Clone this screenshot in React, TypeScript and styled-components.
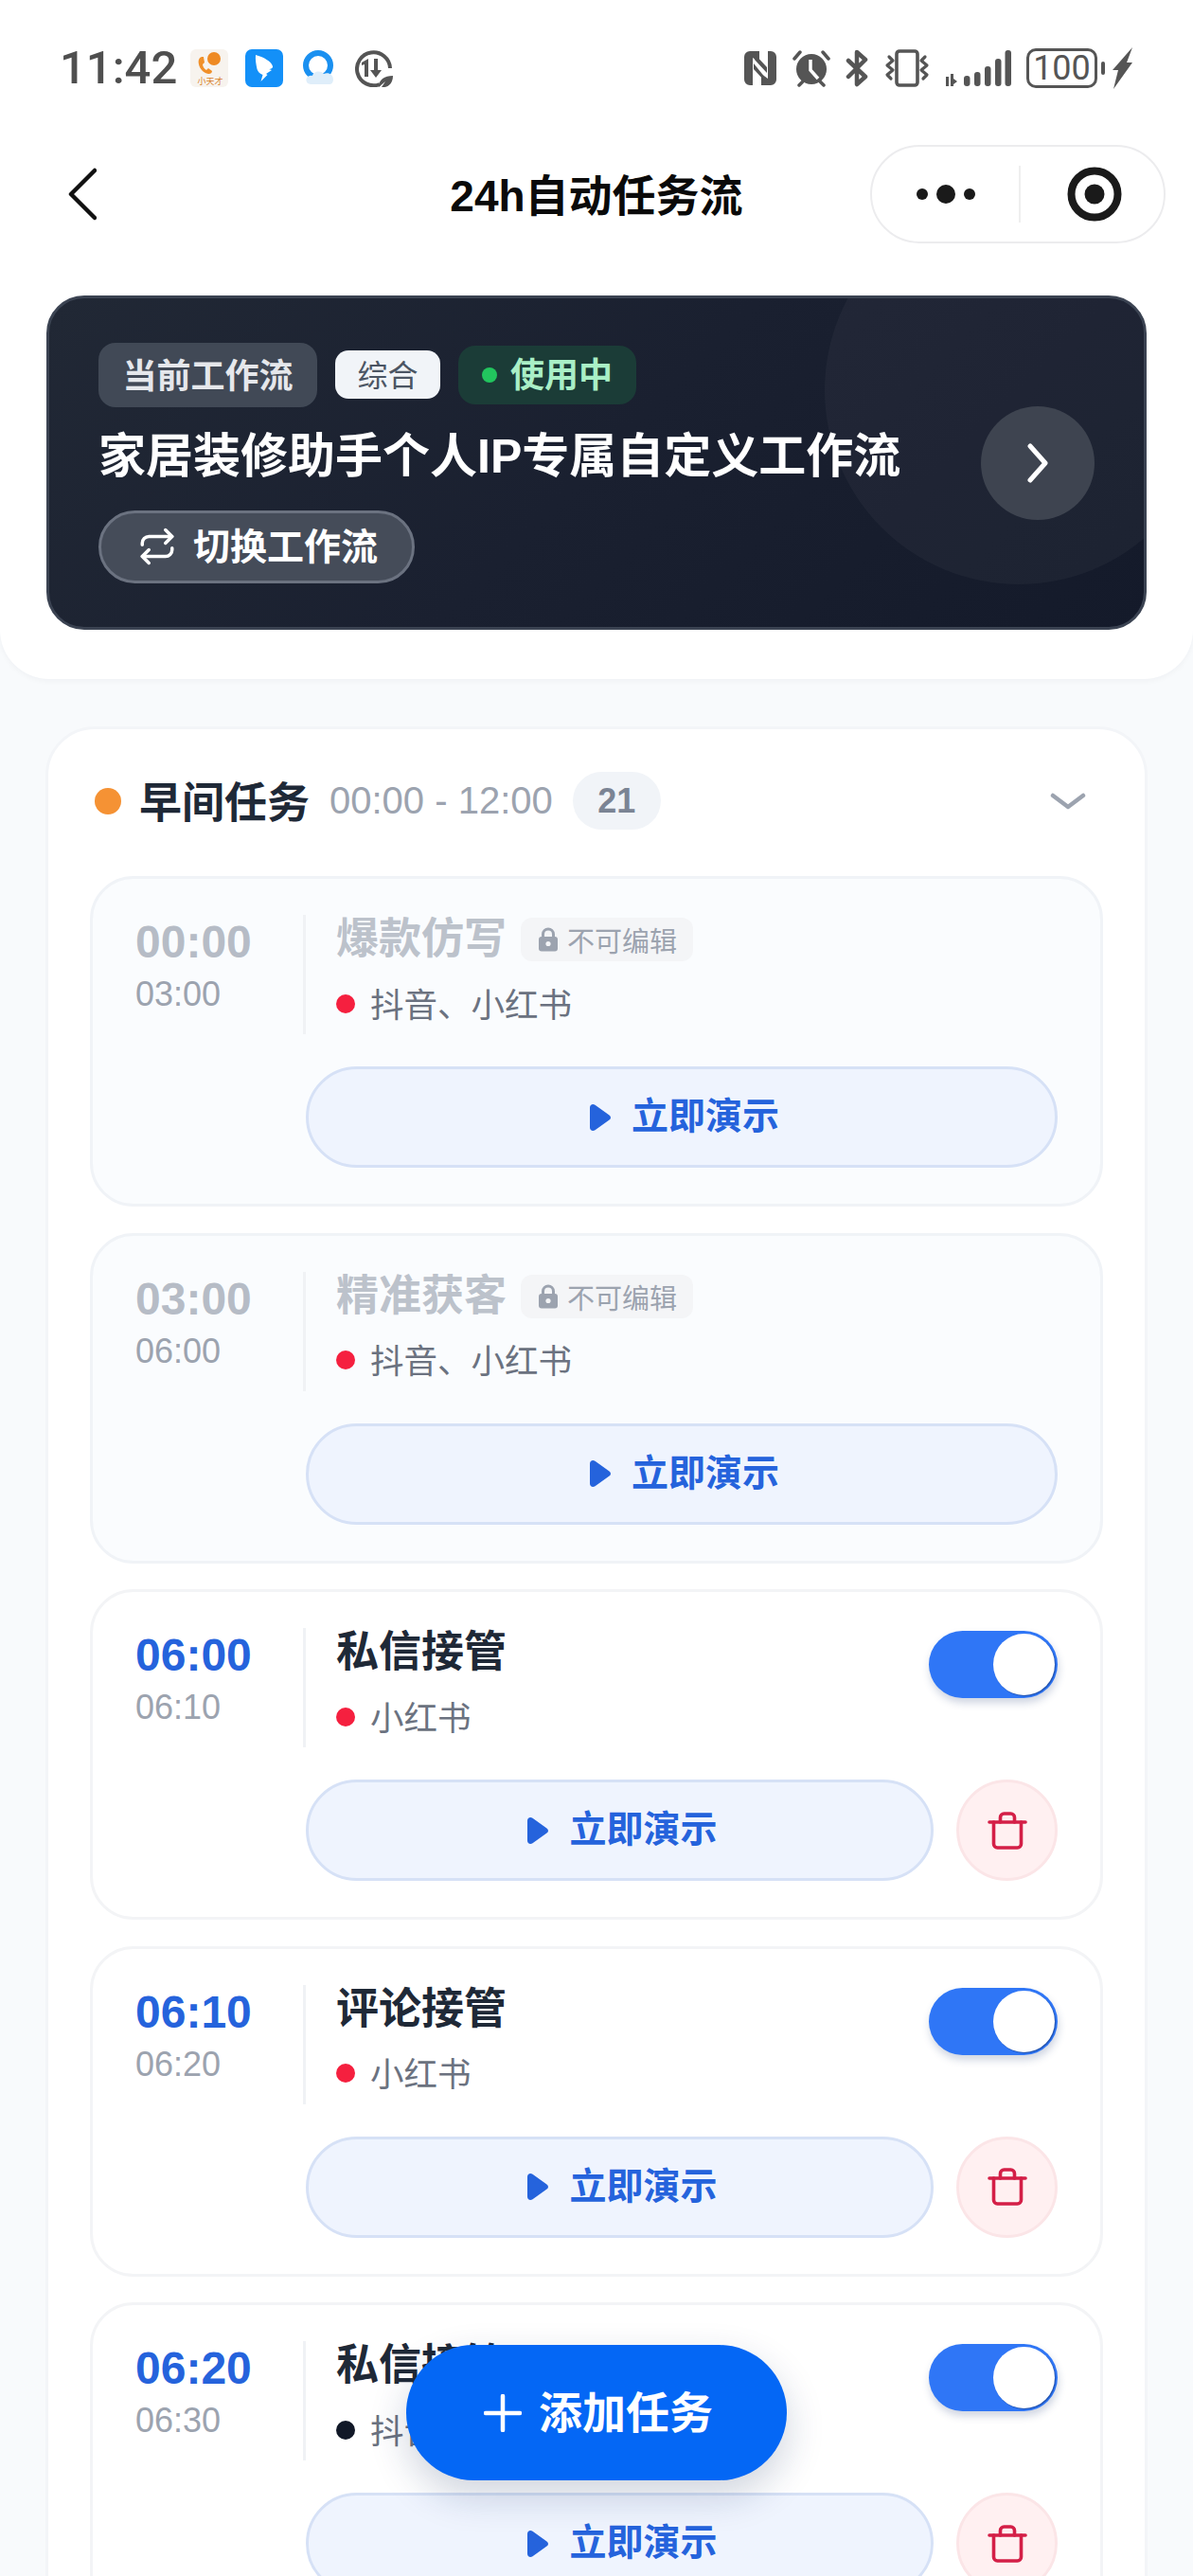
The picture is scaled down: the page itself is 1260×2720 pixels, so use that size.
import React from 'react';
import styled, { createGlobalStyle } from 'styled-components';
import { Repeat } from 'lucide-react';

const GlobalStyle = createGlobalStyle`
  html, body {
    margin: 0;
    padding: 0;
    background: #f8fafc;
  }
  * {
    box-sizing: border-box;
  }
`;

const FONT = `"Liberation Sans", "Noto Sans CJK SC", sans-serif`;

interface Task {
  start: string;
  end: string;
  title: string;
  platform: string;
  dot: string;
  locked?: boolean;
}

const TASKS: Task[] = [
  { start: '00:00', end: '03:00', title: '爆款仿写', platform: '抖音、小红书', dot: '#f5203f', locked: true },
  { start: '03:00', end: '06:00', title: '精准获客', platform: '抖音、小红书', dot: '#f5203f', locked: true },
  { start: '06:00', end: '06:10', title: '私信接管', platform: '小红书', dot: '#f5203f' },
  { start: '06:10', end: '06:20', title: '评论接管', platform: '小红书', dot: '#f5203f' },
  { start: '06:20', end: '06:30', title: '私信接管', platform: '抖音', dot: '#111827' },
];

const PlayIcon = () => (
  <svg width="24" height="30" viewBox="0 0 24 30">
    <path d="M1 4.5C1 1.5 4 0 6.5 1.8L21.5 12.4C23.5 13.8 23.5 16.2 21.5 17.6L6.5 28.2C4 30 1 28.5 1 25.5Z" fill="#2563dc" />
  </svg>
);

const TrashIcon = () => (
  <svg width="42" height="42" viewBox="0 0 42 42" fill="none" stroke="#d41f47" strokeWidth="3.6" strokeLinecap="round" strokeLinejoin="round">
    <path d="M2 12H40" />
    <path d="M6.5 12V35a4 4 0 0 0 4 4H31.5a4 4 0 0 0 4-4V12" />
    <path d="M13.5 12V7a4 4 0 0 1 4-4h7a4 4 0 0 1 4 4v5" />
  </svg>
);

const LockIcon = () => (
  <svg width="22" height="26" viewBox="0 0 22 26">
    <path d="M5.5 11V7.5a5.5 5.5 0 0 1 11 0V11" fill="none" stroke="#9ca3af" strokeWidth="3" />
    <rect x="1" y="10" width="20" height="15.5" rx="3" fill="#9ca3af" />
    <circle cx="11" cy="17.5" r="2.6" fill="#f4f5f7" />
  </svg>
);

const StatusIcons = () => (
  <>
    <svg width="40" height="40" viewBox="0 0 40 40">
      <rect width="40" height="40" rx="6" fill="#f7f3ee" />
      <path d="M12 8c-3 1-4 4-3 8 1 5 5 9 10 10 2 .4 4-1 4-3l-4-3-2 2c-2-1-4-4-4-6l2-2-1-6z" fill="#f0902a" />
      <circle cx="25" cy="10" r="7" fill="#ee8a24" />
      <text x="21" y="37" textAnchor="middle" fontSize="9" fill="#d9822b" fontFamily="Noto Sans CJK SC">小天才</text>
    </svg>
    <svg width="40" height="40" viewBox="0 0 40 40">
      <rect width="40" height="40" rx="7" fill="#1390f8" />
      <path d="M11 6c8 2 17 7 18 12 .4 2-2 3-4 3l3 1-6 4 1.500 1-7 7 2-7c-3-1-5-3-6-6-1-5-2-10-1.500-15z" fill="#fff" />
    </svg>
    <svg width="40" height="40" viewBox="0 0 40 40">
      <circle cx="19" cy="17" r="13" fill="none" stroke="#1a90f0" strokeWidth="6" />
      <path d="M8 36c-4-4 0-9 5-8 1-5 9-6 12-2 5-2 10 1 10 6 0 3-2 5-4 5H11z" fill="#dfeefa" />
    </svg>
    <svg width="40" height="40" viewBox="0 0 40 40">
      <path d="M26 37A17.500 17.500 0 1 1 37 20" fill="none" stroke="#555" strokeWidth="4" />
      <path d="M14 10v19h-4V16l-3 1v-3zM20 10h4v12h4l-6 8-6-8h4z" fill="#555" />
      <path d="M25 40c0-8 6-12 15-12 0 8-5 13-12 12l4-6z" fill="#555" />
    </svg>
  </>
);

const SystemIcons = () => (
  <>
    <svg width="36" height="38" viewBox="0 0 36 38">
      <path d="M7 1h3l7 0v12L10 8v29H7a6 6 0 0 1-6-6V7a6 6 0 0 1 6-6z" fill="#555" />
      <path d="M29 37h-10V25l7 5V1h3a6 6 0 0 1 6 6v24a6 6 0 0 1-6 6z" fill="#555" />
      <path d="M12 4l13 14v6L12 10zM11 14l13 16v4L11 20z" fill="#555" />
    </svg>
    <svg width="40" height="40" viewBox="0 0 40 40">
      <circle cx="20" cy="21" r="16" fill="#555" />
      <path d="M19 11v11l8 9" fill="none" stroke="#fff" strokeWidth="3.500" />
      <path d="M2 10l6-7M38 10l-6-7M7 38l4-4M33 38l-4-4" stroke="#555" strokeWidth="3.500" strokeLinecap="round" />
    </svg>
    <svg width="25" height="40" viewBox="0 0 25 40" fill="none" stroke="#555" strokeWidth="4.500" strokeLinejoin="round" strokeLinecap="round">
      <path d="M3 12l18 17-9 8V3l9 8L3 29" />
    </svg>
    <svg width="48" height="40" viewBox="0 0 48 40" fill="none" stroke="#555" strokeWidth="3.200" strokeLinejoin="round" strokeLinecap="round">
      <rect x="13" y="2" width="22" height="36" rx="3" strokeWidth="3.600" />
      <path d="M5 8l4 4-6 5 6 5-6 5 4 4" />
      <path d="M43 8l-4 4 6 5-6 5 6 5-4 4" />
    </svg>
    <svg width="70" height="40" viewBox="0 0 70 40" fill="#555">
      <path d="M1 29h3v10H1zM6 26h3v13H6zM9 31l4 3-4 3z" />
      <rect x="20" y="28" width="6.500" height="11" rx="3" />
      <rect x="31" y="24" width="6.500" height="15" rx="3" />
      <rect x="42" y="18" width="6.500" height="21" rx="3" />
      <rect x="53" y="10" width="6.500" height="29" rx="3" />
      <rect x="63.500" y="1" width="6.500" height="38" rx="3" />
    </svg>
  </>
);

const App = () => {
  return (
    <>
      <GlobalStyle />
      <Page>
        <TopPanel>
          <StatusBar>
            <StatusLeft>
              <Clock>11:42</Clock>
              <StatusIcons />
            </StatusLeft>
            <StatusRight>
              <SystemIcons />
              <Battery>
                <BatteryBody>100</BatteryBody>
                <BatteryNub />
                <svg width="21" height="44" viewBox="0 0 21 44">
                  <path d="M21 0L15 16h6L1 44l5-20H0z" fill="#555" />
                </svg>
              </Battery>
            </StatusRight>
          </StatusBar>

          <NavBar>
            <BackButton>
              <svg width="30" height="56" viewBox="0 0 30 56" fill="none" stroke="#111" strokeWidth="4.500" strokeLinecap="round" strokeLinejoin="round">
                <path d="M28 3L3 28l25 25" />
              </svg>
            </BackButton>
            <NavTitle>24h自动任务流</NavTitle>
            <Capsule>
              <MoreButton>
                <svg width="62" height="22" viewBox="0 0 62 22" fill="#1a1a1a">
                  <circle cx="6" cy="11" r="6" />
                  <circle cx="31" cy="11" r="10" />
                  <circle cx="56" cy="11" r="6" />
                </svg>
              </MoreButton>
              <CapsuleDivider />
              <TargetButton>
                <svg width="58" height="58" viewBox="0 0 58 58">
                  <circle cx="29" cy="29" r="24.500" fill="none" stroke="#1a1a1a" strokeWidth="8" />
                  <circle cx="29" cy="29" r="10.500" fill="#1a1a1a" />
                </svg>
              </TargetButton>
            </Capsule>
          </NavBar>

          <Banner>
            <BannerCircle />
            <BannerMain>
              <ChipRow>
                <CurrentChip>当前工作流</CurrentChip>
                <TypeChip>综合</TypeChip>
                <ActiveChip>
                  <ActiveDot />
                  使用中
                </ActiveChip>
              </ChipRow>
              <BannerTitle>家居装修助手个人IP专属自定义工作流</BannerTitle>
              <SwitchButton>
                <Repeat size={42} strokeWidth={2} />
                切换工作流
              </SwitchButton>
            </BannerMain>
            <ArrowButton>
              <svg width="24" height="42" viewBox="0 0 24 42" fill="none" stroke="#fff" strokeWidth="5" strokeLinecap="round" strokeLinejoin="round">
                <path d="M4 3l16 18L4 39" />
              </svg>
            </ArrowButton>
          </Banner>
        </TopPanel>

        <Section>
          <SectionHeader>
            <SectionDot />
            <SectionTitle>早间任务</SectionTitle>
            <SectionRange>00:00 - 12:00</SectionRange>
            <CountBadge>21</CountBadge>
            <Collapse>
              <svg width="38" height="18" viewBox="0 0 38 18" fill="none" stroke="#9ca3af" strokeWidth="4.500" strokeLinecap="round" strokeLinejoin="round">
                <path d="M3 3l16 12L35 3" />
              </svg>
            </Collapse>
          </SectionHeader>

          <TaskList>
            {TASKS.map((task, index) => (
              <TaskCard key={index} $locked={task.locked}>
                <TaskTop>
                  <TimeColumn>
                    <StartTime $locked={task.locked}>{task.start}</StartTime>
                    <EndTime>{task.end}</EndTime>
                  </TimeColumn>
                  <TaskBody>
                    <TitleRow>
                      <TaskTitle $locked={task.locked}>{task.title}</TaskTitle>
                      {task.locked && (
                        <LockChip>
                          <LockIcon />
                          不可编辑
                        </LockChip>
                      )}
                    </TitleRow>
                    <PlatformRow>
                      <PlatformDot $color={task.dot} />
                      {task.platform}
                    </PlatformRow>
                  </TaskBody>
                  {!task.locked && (
                    <Toggle>
                      <ToggleKnob />
                    </Toggle>
                  )}
                </TaskTop>
                <TaskActions>
                  <DemoButton>
                    <PlayIcon />
                    <DemoLabel>立即演示</DemoLabel>
                  </DemoButton>
                  {!task.locked && (
                    <DeleteButton>
                      <TrashIcon />
                    </DeleteButton>
                  )}
                </TaskActions>
              </TaskCard>
            ))}
          </TaskList>
        </Section>

        <AddButton>
          <svg width="40" height="40" viewBox="0 0 40 40" fill="none" stroke="#fff" strokeWidth="4.500" strokeLinecap="round">
            <path d="M20 2V38M2 20H38" />
          </svg>
          <AddLabel>添加任务</AddLabel>
        </AddButton>
      </Page>
    </>
  );
};

const Page = styled.div`
  position: relative;
  width: 1260px;
  height: 2720px;
  overflow: hidden;
  background: #f8fafc;
  font-family: ${FONT};
`;

const TopPanel = styled.header`
  height: 717px;
  padding-top: 50px;
  border-radius: 0 0 52px 52px;
  background: #fff;
  box-shadow: 0 2px 6px rgba(15, 23, 42, 0.04);
`;

const StatusBar = styled.div`
  display: flex;
  justify-content: space-between;
  align-items: center;
  height: 44px;
  padding: 0 64px 0 63px;
`;

const StatusLeft = styled.div`
  display: flex;
  align-items: center;
  gap: 18px;
`;

const Clock = styled.span`
  margin-right: -4px;
  color: #4f4f4f;
  font-family: Roboto, sans-serif;
  font-size: 49px;
  font-weight: 500;
  line-height: 44px;
`;

const StatusRight = styled.div`
  display: flex;
  align-items: center;
  gap: 16px;
`;

const Battery = styled.div`
  display: flex;
  align-items: center;
`;

const BatteryBody = styled.div`
  width: 75px;
  height: 42px;
  border: 3px solid #555;
  border-radius: 10px;
  color: #555;
  font-family: Roboto, sans-serif;
  font-size: 36px;
  line-height: 36px;
  text-align: center;
`;

const BatteryNub = styled.div`
  width: 4px;
  height: 14px;
  margin: 0 8px 0 4px;
  border-radius: 2px;
  background: #555;
`;

const NavBar = styled.nav`
  display: grid;
  grid-template-columns: 1fr auto 1fr;
  align-items: center;
  height: 104px;
  margin-top: 59px;
  padding: 0 29px;
`;

const BackButton = styled.div`
  display: flex;
  margin-left: 43px;
`;

const NavTitle = styled.h1`
  margin: -4px 0 0;
  color: #0a0a0a;
  font-size: 46px;
  font-weight: 700;
  white-space: nowrap;
`;

const Capsule = styled.div`
  justify-self: end;
  display: flex;
  align-items: center;
  width: 312px;
  height: 104px;
  border: 2px solid #ececee;
  border-radius: 52px;
  background: #fff;
`;

const MoreButton = styled.div`
  display: flex;
  align-items: center;
  justify-content: center;
  width: 155px;
`;

const TargetButton = styled.div`
  flex: 1;
  display: flex;
  align-items: center;
  justify-content: center;
  padding-left: 5px;
`;

const CapsuleDivider = styled.div`
  width: 2px;
  height: 60px;
  background: #efefef;
`;

const Banner = styled.section`
  position: relative;
  display: flex;
  align-items: center;
  justify-content: space-between;
  height: 353px;
  margin: 55px 49px 0;
  padding: 0 52px;
  overflow: hidden;
  border: 3px solid #3b4352;
  border-radius: 40px;
  background: linear-gradient(135deg, #212835 0%, #1a2030 50%, #141a2a 100%);
`;

const BannerCircle = styled.div`
  position: absolute;
  top: -108px;
  right: -73px;
  width: 410px;
  height: 410px;
  border-radius: 50%;
  background: rgba(255, 255, 255, 0.035);
`;

const BannerMain = styled.div`
  position: relative;
  display: flex;
  flex-direction: column;
  align-items: flex-start;
`;

const ChipRow = styled.div`
  display: flex;
  align-items: center;
  height: 68px;
`;

const CurrentChip = styled.span`
  display: flex;
  align-items: center;
  justify-content: center;
  width: 231px;
  height: 68px;
  padding-bottom: 4px;
  border-radius: 18px;
  background: #414956;
  color: #e5e7eb;
  font-size: 36px;
  font-weight: 700;
`;

const TypeChip = styled.span`
  display: flex;
  align-items: center;
  justify-content: center;
  width: 111px;
  height: 51px;
  margin-left: 19px;
  padding-bottom: 4px;
  border-radius: 14px;
  background: #f1f4f8;
  color: #4b5563;
  font-size: 32px;
`;

const ActiveChip = styled.span`
  display: flex;
  align-items: center;
  width: 188px;
  height: 62px;
  margin-left: 19px;
  padding: 0 0 5px 25px;
  border-radius: 18px;
  background: #1b3c37;
  color: #a9efc6;
  font-size: 36px;
  font-weight: 700;
`;

const ActiveDot = styled.i`
  width: 16px;
  height: 16px;
  margin: 5px 14px 0 0;
  border-radius: 50%;
  background: #22c55e;
`;

const BannerTitle = styled.h2`
  margin: 22px 0 0;
  color: #fff;
  font-size: 50px;
  font-weight: 700;
  line-height: 60px;
  white-space: nowrap;
`;

const SwitchButton = styled.div`
  display: flex;
  align-items: center;
  gap: 17px;
  width: 334px;
  height: 77px;
  margin-top: 27px;
  padding: 0 0 6px 38px;
  border: 3px solid #6b7280;
  border-radius: 39px;
  background: #454c59;
  color: #fff;
  font-size: 39px;
  font-weight: 700;
  svg {
    flex-shrink: 0;
    margin-top: 6px;
  }
`;

const ArrowButton = styled.div`
  position: relative;
  display: flex;
  align-items: center;
  justify-content: center;
  width: 120px;
  height: 120px;
  border-radius: 50%;
  background: #3e4450;
`;

const Section = styled.section`
  height: 2200px;
  margin: 50px 48px 0;
  padding: 45px 44px 0;
  border: 3px solid #f3f5f8;
  border-radius: 52px;
  background: #fff;
`;

const SectionHeader = styled.div`
  display: flex;
  align-items: center;
  height: 61px;
  margin-bottom: 49px;
  padding-left: 5px;
`;

const SectionDot = styled.i`
  width: 28px;
  height: 28px;
  border-radius: 50%;
  background: #f59234;
`;

const SectionTitle = styled.h3`
  margin: -3px 0 0 19px;
  color: #1f2937;
  font-size: 45px;
  font-weight: 700;
`;

const SectionRange = styled.span`
  margin-left: 21px;
  color: #9ca3af;
  font-size: 40px;
`;

const CountBadge = styled.span`
  display: flex;
  align-items: center;
  justify-content: center;
  width: 93px;
  height: 61px;
  margin-left: 21px;
  border-radius: 31px;
  background: #f1f4f8;
  color: #7b8494;
  font-size: 36px;
  font-weight: 700;
`;

const Collapse = styled.div`
  display: flex;
  margin-left: auto;
  margin-right: 18px;
`;

const TaskList = styled.div`
  display: flex;
  flex-direction: column;
  gap: 27.6px;
`;

const TaskCard = styled.article<{ $locked?: boolean }>`
  height: 349px;
  padding: 38px 45px 0 45px;
  border: 3px solid ${p => (p.$locked ? '#f0f3f7' : '#f3f4f6')};
  border-radius: 46px;
  background: ${p => (p.$locked ? '#fafcfe' : '#fff')};
`;

const TaskTop = styled.div`
  display: flex;
  height: 126px;
`;

const TimeColumn = styled.div`
  display: flex;
  flex-direction: column;
  width: 177px;
  padding-top: 1px;
`;

const StartTime = styled.span<{ $locked?: boolean }>`
  color: ${p => (p.$locked ? '#b6bcc6' : '#2563dc')};
  font-size: 48px;
  font-weight: 700;
  line-height: 56px;
`;

const EndTime = styled.span`
  margin-top: 8px;
  color: #9ca3af;
  font-size: 36px;
  line-height: 38px;
`;

const TaskBody = styled.div`
  flex: 1;
  padding: 1px 0 0 32px;
  border-left: 3px solid #f0f2f5;
`;

const TitleRow = styled.div`
  display: flex;
  align-items: center;
  height: 50px;
`;

const TaskTitle = styled.h4<{ $locked?: boolean }>`
  margin: 0;
  color: ${p => (p.$locked ? '#bcc2cb' : '#1f2937')};
  font-size: 45px;
  font-weight: 700;
  line-height: 50px;
`;

const LockChip = styled.span`
  display: flex;
  align-items: center;
  gap: 9px;
  height: 46px;
  margin-left: 15px;
  padding: 0 17px 0 18px;
  border-radius: 12px;
  background: #f4f5f7;
  color: #9ca3af;
  font-size: 29px;
`;

const PlatformRow = styled.div`
  display: flex;
  align-items: center;
  height: 46px;
  margin-top: 18px;
  color: #6b7280;
  font-size: 35.5px;
`;

const PlatformDot = styled.i<{ $color: string }>`
  flex-shrink: 0;
  width: 20px;
  height: 20px;
  margin: 3px 16px 0 0;
  border-radius: 50%;
  background: ${p => p.$color};
`;

const Toggle = styled.div`
  display: flex;
  align-items: center;
  justify-content: flex-end;
  width: 136px;
  height: 71px;
  margin-top: 3px;
  padding-right: 3px;
  border-radius: 36px;
  background: #2f76f6;
  box-shadow: 1px 5px 8px rgba(30, 60, 120, 0.22);
`;

const ToggleKnob = styled.div`
  width: 65px;
  height: 65px;
  border-radius: 50%;
  background: #fff;
  box-shadow: 1px 1px 1px rgba(20, 50, 110, 0.55);
`;

const TaskActions = styled.div`
  display: flex;
  gap: 24px;
  margin-top: 34px;
  margin-left: 180px;
`;

const DemoButton = styled.div`
  flex: 1;
  display: flex;
  align-items: center;
  justify-content: center;
  gap: 21px;
  height: 107px;
  padding-left: 5px;
  border: 3px solid #d6e1f6;
  border-radius: 54px;
  background: #eff4fe;
  color: #2563dc;
  font-size: 39px;
  font-weight: 700;
`;

const DemoLabel = styled.span`
  margin-top: -9px;
`;

const DeleteButton = styled.div`
  display: flex;
  align-items: center;
  justify-content: center;
  flex-shrink: 0;
  width: 107px;
  height: 107px;
  border: 3px solid #fbe5e7;
  border-radius: 50%;
  background: #fff0f1;
`;

const AddButton = styled.div`
  position: absolute;
  left: 429px;
  bottom: 101px;
  display: flex;
  align-items: center;
  justify-content: center;
  gap: 18px;
  width: 402px;
  height: 143px;
  padding-left: 4px;
  border-radius: 72px;
  background: #0467f5;
  box-shadow: 0 16px 40px rgba(15, 40, 90, 0.2);
  color: #fff;
  font-size: 46px;
  font-weight: 700;
`;

const AddLabel = styled.span`
  margin-top: -8px;
`;

export default App;
